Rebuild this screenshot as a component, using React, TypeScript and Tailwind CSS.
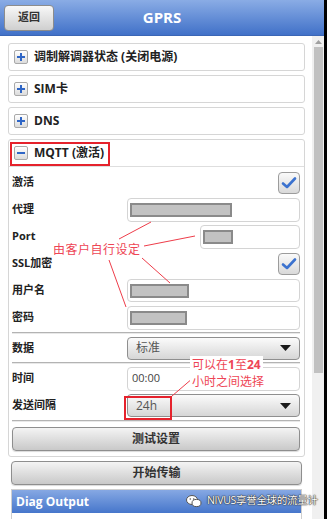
import React from "react";

const FONT = "font-['Open_Sans','Noto_Sans_CJK_SC',sans-serif]";

function PlusBox({ minus = false }: { minus?: boolean }) {
  return (
    <div className="w-[14px] h-[14px] rounded-[2px] border border-[#a9a9a9] bg-gradient-to-b from-white to-[#dcdcdc] flex items-center justify-center">
      <svg width="10" height="10" viewBox="0 0 10 10">
        <rect x="1" y="4" width="8" height="2" fill="#2f66c6" />
        {!minus && <rect x="4" y="1" width="2" height="8" fill="#2f66c6" />}
      </svg>
    </div>
  );
}

function Card({ title, minus = false }: { title: string; minus?: boolean }) {
  return (
    <div className="h-[28px] rounded-[3px] border border-[#d6d6d6] bg-white flex items-center pl-[5px] gap-[6px] shrink-0">
      <PlusBox minus={minus} />
      <span className="text-[12px] font-bold text-[#222]">{title}</span>
    </div>
  );
}

function Check() {
  return (
    <div className="w-[22px] h-[22px] rounded-[4px] border border-[#9c9c9c] bg-gradient-to-b from-[#fafafa] to-[#d9d9d9] flex items-center justify-center">
      <svg width="16" height="14" viewBox="0 0 16 14">
        <path d="M2 7.5 L6 11 L14 2.5" fill="none" stroke="#3b72cf" strokeWidth="2.6" strokeLinecap="round" strokeLinejoin="round" />
      </svg>
    </div>
  );
}

function Row({ label, children }: { label: string; children?: React.ReactNode }) {
  return (
    <div className="h-[27px] flex items-center">
      <div className="w-[115px] text-[11px] font-bold text-[#222]">{label}</div>
      <div className="flex-1 flex justify-end items-center">{children}</div>
    </div>
  );
}

function Input({ w, fill, h = 24 }: { w: number; fill?: number; h?: number }) {
  return (
    <div
      className="rounded-[4px] border border-[#d4d4d4] bg-white flex items-center pl-[2px]"
      style={{ width: w, height: h }}
    >
      {fill ? (
        <div className="h-[14px] border-2 border-[#8a8a8a] bg-[#c2c2c2]" style={{ width: fill }} />
      ) : null}
    </div>
  );
}

function Select({ value }: { value: string }) {
  return (
    <div className="w-[173px] h-[23px] rounded-[4px] border border-[#8f8f8f] bg-gradient-to-b from-[#fbfbfb] to-[#d6d6d6] flex items-center justify-between pl-[8px] pr-[8px]">
      <span className="text-[12px] text-[#555]">{value}</span>
      <svg width="11" height="6" viewBox="0 0 11 6">
        <path d="M0 0 L11 0 L5.5 6 Z" fill="#1a1a1a" />
      </svg>
    </div>
  );
}

function Divider() {
  return <div className="h-[2px] bg-[#b3b3b3] border-b border-[#e8e8e8] my-[1px]" />;
}

function Button({ label }: { label: string }) {
  return (
    <div className="h-[24px] rounded-[4px] border border-[#8e8e8e] bg-gradient-to-b from-[#f4f4f4] to-[#c9c9c9] flex items-center justify-center shadow-[0_1px_1px_rgba(0,0,0,0.15)]">
      <span className="text-[12px] font-bold text-[#333]">{label}</span>
    </div>
  );
}

export default function App() {
  return (
    <div className={`w-[327px] h-[519px] overflow-hidden flex bg-white relative ${FONT}`}>
      <div className="w-[324px] h-full flex flex-col">
        {/* Header */}
        <div className="h-[36px] shrink-0 bg-gradient-to-b from-[#8aace5] to-[#4171c8] grid grid-cols-[1fr_auto_1fr] items-center border-b border-[#3b66b5]">
          <div className="pl-[4px]">
            <div className="w-[50px] h-[26px] rounded-[4px] border border-[#8c8c8c] bg-gradient-to-b from-[#f8f8f8] to-[#cfcfcf] flex items-center justify-center">
              <span className="text-[11px] font-bold text-[#333]">返回</span>
            </div>
          </div>
          <div className="text-[15px] font-bold text-white">GPRS</div>
          <div />
        </div>

        <div className="flex flex-1 min-h-0">
          {/* content */}
          <div className="w-[312px] pl-[8px] pr-[7px] pt-[7px] flex flex-col gap-[4px]">
            <Card title="调制解调器状态 (关闭电源)" />
            <Card title="SIM卡" />
            <Card title="DNS" />
            <div className="rounded-[3px] border border-[#d6d6d6] bg-white shrink-0">
              <div className="h-[27px] flex items-center pl-[5px] gap-[6px] border-b border-[#dedede]">
                <PlusBox minus />
                <span className="text-[12px] font-bold text-[#222]">MQTT (激活)</span>
              </div>
              <div className="pl-[3px] pr-[4px] pt-[2px] pb-[5px]">
                <Row label="激活"><Check /></Row>
                <Row label="代理"><Input w={173} fill={102} /></Row>
                <Row label="Port"><Input w={100} fill={30} /></Row>
                <Row label="SSL加密"><Check /></Row>
                <Row label="用户名"><Input w={173} h={23} fill={59} /></Row>
                <Row label="密码"><Input w={173} fill={57} /></Row>
                <Divider />
                <div className="h-[26px] flex items-center">
                  <div className="w-[115px] text-[11px] font-bold text-[#222]">数据</div>
                  <div className="flex-1 flex justify-end"><Select value="标准" /></div>
                </div>
                <Divider />
                <div className="h-[27px] flex items-center">
                  <div className="w-[115px] text-[11px] font-bold text-[#222]">时间</div>
                  <div className="flex-1 flex justify-end">
                    <div className="w-[173px] h-[24px] rounded-[4px] border border-[#d4d4d4] bg-white flex items-center pl-[4px]">
                      <span className="text-[11px] text-[#444]">00:00</span>
                    </div>
                  </div>
                </div>
                <div className="h-[27px] flex items-center">
                  <div className="w-[115px] text-[11px] font-bold text-[#222]">发送间隔</div>
                  <div className="flex-1 flex justify-end"><Select value="24h" /></div>
                </div>
                <Divider />
                <div className="pt-[4px]">
                  <Button label="测试设置" />
                </div>
              </div>
            </div>
            <div className="px-[3px] flex flex-col gap-[4px]">
              <Button label="开始传输" />
              <div className="border border-[#cfcfcf] bg-white h-[40px]">
                <div className="h-[23px] bg-gradient-to-b from-[#86a8e3] to-[#4676cb] flex items-center pl-[4px]">
                  <span className="text-[12px] font-bold text-white">Diag Output</span>
                </div>
              </div>
            </div>
          </div>
          {/* scrollbar */}
          <div className="w-[12px] bg-[#f0f0f0] flex flex-col items-center pt-[4px]">
            <svg width="7" height="4" viewBox="0 0 7 4">
              <path d="M0 4 L3.5 0 L7 4 Z" fill="#a0a0a0" />
            </svg>
            <div className="w-[9px] h-[326px] bg-[#c1c1c1] mt-[3px]" />
          </div>
        </div>
      </div>
      <div className="w-[3px] h-full bg-black" />

      {/* Annotation overlay */}
      <div className="absolute left-[10px] top-[142px] w-[100px] h-[24px] border-2 border-[#e5222c]" />
      <div className="absolute left-[124px] top-[396px] w-[48px] h-[24px] border-2 border-[#e5222c]" />
      <svg className="absolute left-0 top-0" width="327" height="519" viewBox="0 0 327 519">
        <g stroke="#ee3d4a" strokeWidth="1" fill="none">
          <line x1="151" y1="222" x2="119" y2="239" />
          <line x1="144" y1="246" x2="195" y2="236" />
          <line x1="109" y1="260" x2="126" y2="307" />
          <line x1="142" y1="258" x2="170" y2="283" />
          <line x1="193" y1="378" x2="172" y2="396" />
        </g>
      </svg>
      <div className="absolute left-[53px] top-[242px] text-[12px] leading-[16px] tracking-[0.5px] text-[#ee4555] whitespace-nowrap">
        由客户自行设定
      </div>
      <div className="absolute left-[190px] top-[356px] flex flex-col items-start text-[12px] leading-[17px] text-[#ee4555] whitespace-nowrap">
        <span className="bg-white px-[2px]">可以在<b>1</b>至<b>24</b></span>
        <span className="bg-white px-[2px]">小时之间选择</span>
      </div>

      {/* watermark */}
      <div className="absolute left-[186px] top-[493px] flex items-center gap-[5px] whitespace-nowrap">
        <svg width="16" height="14" viewBox="0 0 16 14">
          <ellipse cx="6" cy="6" rx="5.5" ry="4.5" fill="#fff" stroke="#555" strokeWidth="1" />
          <ellipse cx="10.5" cy="9" rx="4.5" ry="3.6" fill="#fff" stroke="#555" strokeWidth="1" />
          <circle cx="4.3" cy="5" r="0.8" fill="#555" />
          <circle cx="7.7" cy="5" r="0.8" fill="#555" />
        </svg>
        <span className="text-[10.5px] tracking-[-0.3px] text-white [text-shadow:0_0_1px_#222,0_0_1px_#222,0_0_2px_#444]">NIVUS享誉全球的流量计</span>
      </div>
    </div>
  );
}
